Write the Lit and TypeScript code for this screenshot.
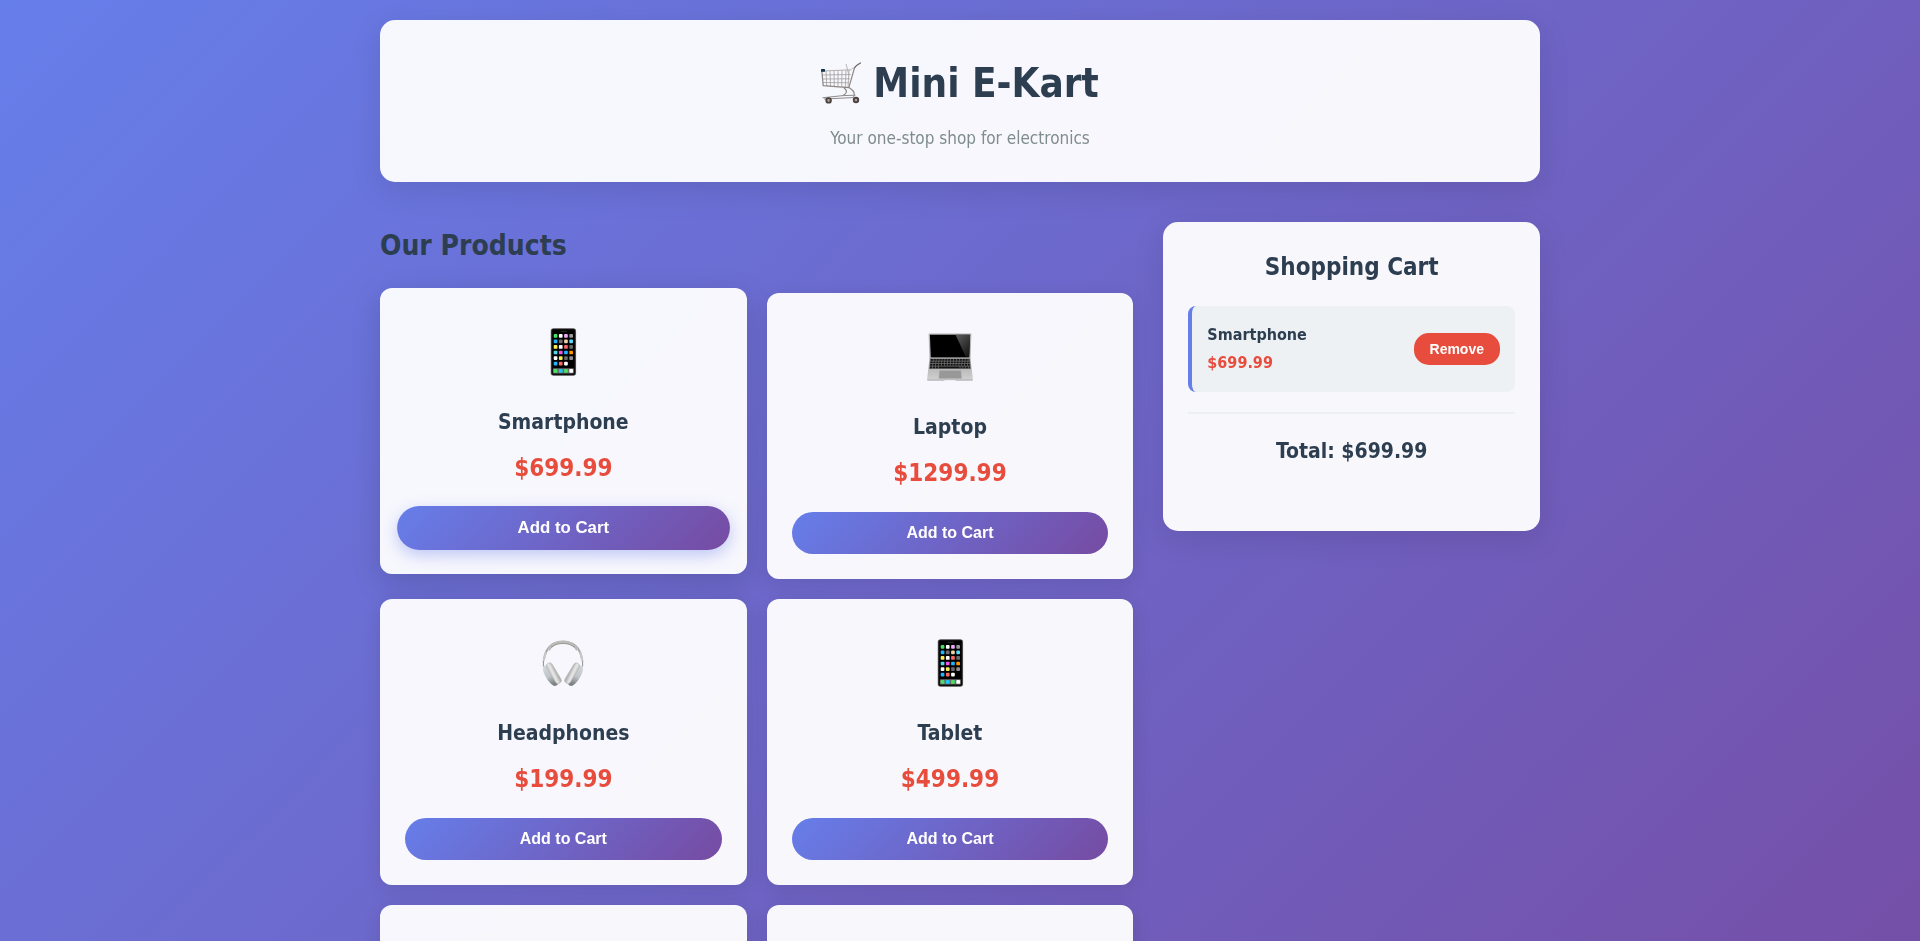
import { LitElement, html, css, svg } from "lit";
import { customElement, property } from "lit/decorators.js";

type Product = { name: string; price: string; icon: string; active?: boolean };

const PRODUCTS: Product[] = [
  { name: "Smartphone", price: "$699.99", icon: "phone", active: true },
  { name: "Laptop", price: "$1299.99", icon: "laptop" },
  { name: "Headphones", price: "$199.99", icon: "headphones" },
  { name: "Tablet", price: "$499.99", icon: "phone" },
];

// Colours of the home-screen tiles, row by row, four per row.
const TILES = [
  "#4be065", "#ffffff", "#f0a8fa", "#9a9a9a",
  "#1fb4ff", "#6e6e6e", "#f3cfa4", "#55dcfa",
  "#f8ee55", "#ffffff", "#fa6660", "#6a6a6a",
  "#4fdcea", "#f155e8", "#1fb4ff", "#ff9500",
  "#ffffff", "#f8ee55", "#6a6a6a", "#8f8f8f",
  "#1fb4ff", "#fa6660", "#ffffff",
];
const DOCK = ["#4be065", "#1cc8f5", "#4be065", "#ffffff"];

const phone = svg`
  <rect x="11.7" y="0.3" width="25.4" height="47.4" rx="2.6" fill="#7a7a7a"/>
  <rect x="12.3" y="0.8" width="24.2" height="46.4" rx="2.2" fill="#141414"/>
  <rect x="13.4" y="1.8" width="22" height="44.4" rx="1.4" fill="#000"/>
  <rect x="21.5" y="2.8" width="6.5" height="1.2" rx="0.6" fill="#242424"/>
  ${TILES.map((c, i) => svg`<rect x=${14.7 + (i % 4) * 5.2} y=${6 + Math.floor(i / 4) * 5.55} width="3.7" height="3.7" rx="0.9" fill=${c}/>`)}
  <rect x="13.9" y="40.3" width="21" height="5.2" rx="0.8" fill="#6d6d6d"/>
  ${DOCK.map((c, i) => svg`<rect x=${14.7 + i * 5.2} y="41.1" width="3.7" height="3.7" rx="0.9" fill=${c}/>`)}`;

const laptop = svg`
  <defs>
    <linearGradient id="glare" x1="0" y1="0" x2="0.7" y2="1">
      <stop offset="0" stop-color="#5c5c5c"/><stop offset="1" stop-color="#1a1a1a"/>
    </linearGradient>
    <linearGradient id="deck" x1="0" y1="0" x2="0" y2="1">
      <stop offset="0" stop-color="#a5a5a5"/><stop offset="1" stop-color="#d2d2d2"/>
    </linearGradient>
  </defs>
  <path d="M3.3.6h41.4q.8 0 .7.8l-.9 24H3.5L2.6 1.4Q2.6.6 3.3.6z" fill="#b4b4b4"/>
  <path d="M3.900 1.700h40.200l-.9 22.800H4.800z" fill="#000"/>
  <path d="M29.500 1.700h14.600l-.9 22.100-3.500-.3z" fill="url(#glare)"/>
  <path d="M3.600 24.800h40.800L46.900 46.200q.2 1.500-1.300 1.500H2.400Q.9 47.700 1.100 46.200z" fill="url(#deck)"/>
  <path d="M4.200 25.700h39.600l1.100 10.400H3.100z" fill="#6f6f6f"/>
  ${[0, 1, 2, 3].map((r) => svg`<path d=${`M${4.7 - r * 0.25} ${26.9 + r * 2.5}H${43.3 + r * 0.25}`} stroke="#141414" stroke-width="1.7" stroke-dasharray=${r === 3 ? "2.2 .7 2.2 .7 2.2 .7 21 .7" : "2.2 .7"}/>`)}
  <path d="M13.400 37.400h21.600l.6 8H12.800z" fill="#989898" stroke="#b4b4b4" stroke-width=".4"/>
  <path d="M1.300 47h45.400" stroke="#9b9b9b" stroke-width=".6"/>
  <path d="M18 47.100h12l-.6.8H18.600z" fill="#eee"/>`;

const earCup = svg`
  <path d="M4.200 27.200q2-2 5 1.200L19.500 44q-1.300 3.300-4.500 3Q12 45.500 9 41.500T4.500 33q-.8-3.500-.3-5.800z" fill="url(#cup)"/>
  <rect x="-3.200" y="-11.500" width="6.400" height="23" rx="3.200" transform="translate(14.800 34.200) rotate(-31)" fill="url(#pad)" stroke="#b2b2b2" stroke-width=".5"/>`;

const headphones = svg`
  <defs>
    <linearGradient id="cup" x1="0" y1="0" x2="0.3" y2="1">
      <stop offset="0" stop-color="#d3d9dd"/><stop offset=".6" stop-color="#bfc5c9"/><stop offset="1" stop-color="#7d8285"/>
    </linearGradient>
    <linearGradient id="pad" x1="0" y1="0" x2="1" y2=".3">
      <stop offset="0" stop-color="#bdbdbd"/><stop offset=".5" stop-color="#e9e9e9"/><stop offset="1" stop-color="#b0b0b0"/>
    </linearGradient>
  </defs>
  <path d="M5 20.500C7 7.500 14.500 2.800 24 2.800s17 4.700 19 17.700" fill="none" stroke="#a5a5a3" stroke-width="1.900"/>
  <path d="M9.500 11C12.500 5.500 17.500 3 24 3S35.500 5.500 38.500 11" fill="none" stroke="#bcbcba" stroke-width="3.200"/>
  <path d="M12 8.400C16 5.400 19.500 4.500 24 4.500s8 .9 12 3.900" fill="none" stroke="#8a8a88" stroke-width=".8"/>
  <path d="M6.500 13.500 4.500 22M41.500 13.500 43.500 22" stroke="#c8c8c8" stroke-width="1.900" stroke-linecap="round"/>
  <path d="M4.400 22v6M43.600 22v6" stroke="#8d9192" stroke-width="1"/>
  <g>${earCup}</g>
  <g transform="matrix(-1 0 0 1 48 0)">${earCup}</g>`;

const ICONS: Record<string, unknown> = { phone, laptop, headphones };

@customElement("product-card")
class ProductCard extends LitElement {
  @property({ attribute: false }) product?: Product;

  static styles = css`
    :host { display: block; }
    .card {
      box-sizing: border-box;
      min-height: 286px;
      padding: 25px;
      border-radius: 12px;
      background: rgba(255, 255, 255, 0.95);
      backdrop-filter: blur(10px);
      box-shadow: 0 4px 20px rgba(0, 0, 0, 0.1);
      text-align: center;
    }
    .card.active {
      transform: translateY(-5px);
      box-shadow: 0 8px 30px rgba(0, 0, 0, 0.15);
    }
    .picture {
      display: flex;
      align-items: center;
      justify-content: center;
      height: 77px;
      margin-bottom: 15px;
    }
    .picture svg { display: block; width: 48px; height: 48px; }
    .name {
      margin: 0 0 10px;
      font-size: 21px;
      line-height: 35px;
      font-weight: 700;
      color: #2c3e50;
    }
    .price {
      margin: 0 0 20px;
      font-size: 24px;
      line-height: 37px;
      font-weight: 700;
      color: #e74c3c;
    }
    .add {
      display: block;
      width: 100%;
      padding: 12px 24px;
      border: 0;
      border-radius: 25px;
      background: linear-gradient(135deg, #667eea 0%, #764ba2 100%);
      color: #fff;
      font: 700 16px/18px "Liberation Sans", Arial, sans-serif;
      cursor: pointer;
    }
    .active .add {
      transform: scale(1.05);
      box-shadow: 0 5px 15px rgba(102, 126, 234, 0.4);
    }
  `;

  render() {
    const p = this.product;
    if (!p) return html`<div class="card"></div>`;
    return html`
      <article class="card ${p.active ? "active" : ""}">
        <div class="picture">
          <svg viewBox="0 0 48 48" aria-hidden="true">${ICONS[p.icon]}</svg>
        </div>
        <h3 class="name">${p.name}</h3>
        <p class="price">${p.price}</p>
        <button class="add" type="button">Add to Cart</button>
      </article>
    `;
  }
}

@customElement("app-root")
class AppRoot extends LitElement {
  static styles = css`
    :host {
      display: block;
      min-height: 100vh;
      background: linear-gradient(135deg, #667eea 0%, #764ba2 100%);
      font-family: "DejaVu Sans Condensed", "DejaVu Sans", sans-serif;
      color: #2c3e50;
    }
    .container {
      box-sizing: border-box;
      max-width: 1200px;
      margin: 0 auto;
      padding: 20px;
    }
    .header {
      margin-bottom: 40px;
      padding: 30px;
      border-radius: 15px;
      background: rgba(255, 255, 255, 0.95);
      backdrop-filter: blur(10px);
      box-shadow: 0 8px 32px rgba(0, 0, 0, 0.1);
      text-align: center;
    }
    .title {
      display: flex;
      align-items: center;
      justify-content: center;
      gap: 12px;
      margin: 0 0 8px;
      font-size: 40px;
      line-height: 66px;
      font-weight: 700;
    }
    .title svg { width: 40px; height: 42px; }
    .tagline {
      margin: 0;
      font-size: 17px;
      line-height: 28px;
      color: #7f8c8d;
    }
    .main {
      display: grid;
      grid-template-columns: 2fr 1fr;
      gap: 30px;
      align-items: start;
    }
    .section-title {
      margin: 0 0 23px;
      font-size: 28px;
      line-height: 48px;
      font-weight: 700;
    }
    .products {
      display: grid;
      grid-template-columns: repeat(auto-fill, minmax(250px, 1fr));
      gap: 20px;
    }
    .cart {
      padding: 25px;
      border-radius: 15px;
      background: rgba(255, 255, 255, 0.95);
      backdrop-filter: blur(10px);
      box-shadow: 0 8px 32px rgba(0, 0, 0, 0.1);
    }
    .cart-title {
      margin: 0 0 18px;
      font-size: 24px;
      line-height: 41px;
      font-weight: 700;
      text-align: center;
    }
    .item {
      display: flex;
      align-items: center;
      justify-content: space-between;
      padding: 15px;
      border-left: 4px solid #667eea;
      border-radius: 8px;
      background: #edf1f4;
    }
    .item-name, .item-price {
      margin: 0;
      font-size: 16px;
      line-height: 28px;
      font-weight: 700;
    }
    .item-price { color: #e74c3c; }
    .remove {
      padding: 8px 16px;
      border: 0;
      border-radius: 15px;
      background: #e74c3c;
      color: #fff;
      font: 700 14px/16px "Liberation Sans", Arial, sans-serif;
      cursor: pointer;
    }
    .total {
      margin: 20px 0 0;
      padding: 20px 0 37px;
      border-top: 2px solid #ecf0f1;
      font-size: 21px;
      line-height: 35px;
      font-weight: 700;
      text-align: center;
    }
  `;

  render() {
    return html`
      <div class="container">
        <header class="header">
          <h1 class="title">
            <svg viewBox="0 0 40 42" aria-hidden="true" fill="none">
              <path d="M1 9 30.500 7.800M1.400 13 29.700 12.500M1.800 17 28.900 16.800M2.200 20.500 28 20.800" stroke="#a19d9b" stroke-width=".8"/>
              <path d="M5 9 5.700 24M9 9 9.500 24M13 9 13.300 24.300M17 8.600 17 24.500M21 8.500 20.700 24.700M25 8.300 24.300 25M28 8 27 25.200" stroke="#a19d9b" stroke-width=".8"/>
              <path d="M.8 8.400 2.200 23.600 27.800 25.600 33.600 5.600" stroke="#8a8482" stroke-width="1.200" stroke-linejoin="round"/>
              <path d="M33.600 5.600Q35 3.500 39.400 1" stroke="#6c6664" stroke-width="1.400" stroke-linecap="round"/>
              <path d="M25 2 28 13.500M30.800 6.500 33.500 6" stroke="#b3aeab" stroke-width=".9"/>
              <rect x="0" y="7" width="4" height="2.800" rx=".6" fill="#16324a"/>
              <path d="M22.500 25.300C27 29 26 31.500 22 33.500M28 25.600C33 29 34.500 31 32.500 35.500" stroke="#8e8a88" stroke-width="1.200"/>
              <path d="M1.400 35.800 22 33.600 34.500 33.200M3 37 32 35.600" stroke="#8e8a88" stroke-width="1"/>
              <circle cx="7.600" cy="38.400" r="3.200" fill="#4b4340"/>
              <circle cx="35" cy="38" r="3.200" fill="#4b4340"/>
              <circle cx="7.600" cy="38.400" r="1.300" fill="#aaa19c"/>
              <circle cx="35" cy="38" r="1.300" fill="#aaa19c"/>
            </svg>
            <span>Mini E-Kart</span>
          </h1>
          <p class="tagline">Your one-stop shop for electronics</p>
        </header>
        <main class="main">
          <section>
            <h2 class="section-title">Our Products</h2>
            <div class="products">
              ${PRODUCTS.map((p) => html`<product-card .product=${p}></product-card>`)}
              <product-card></product-card>
              <product-card></product-card>
            </div>
          </section>
          <aside class="cart">
            <h2 class="cart-title">Shopping Cart</h2>
            <div class="item">
              <div>
                <h4 class="item-name">Smartphone</h4>
                <p class="item-price">$699.99</p>
              </div>
              <button class="remove" type="button">Remove</button>
            </div>
            <p class="total">Total: $699.99</p>
          </aside>
        </main>
      </div>
    `;
  }
}
